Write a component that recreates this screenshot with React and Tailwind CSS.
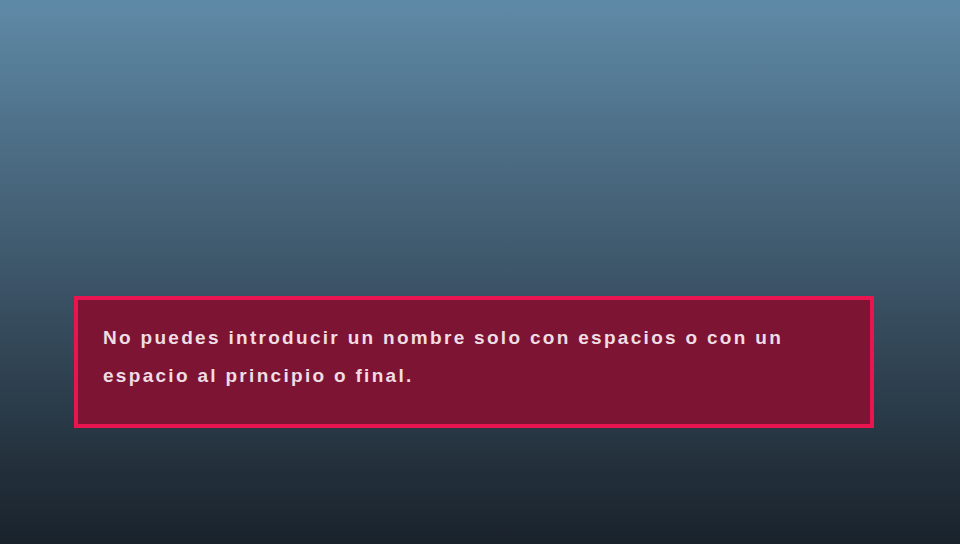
export default function App() {
  return (
    <div className="h-[544px] w-full overflow-hidden bg-gradient-to-b from-[#5f8aa7] via-[#3d5669] to-[#19222b] pt-[296px] pl-[74px]">
      <div className="w-[800px] h-[132px] border-4 border-[#ea1550] bg-[#7e1433] pl-[25px] pt-[19px]">
        <p
          className="text-[19px] font-bold leading-[38px] tracking-[2.3px] text-[#efdde4]"
          style={{ fontFamily: '"Liberation Sans", Arial, sans-serif' }}
        >
          No puedes introducir un nombre solo con espacios o con un
          <br />
          espacio al principio o final.
        </p>
      </div>
    </div>
  );
}
